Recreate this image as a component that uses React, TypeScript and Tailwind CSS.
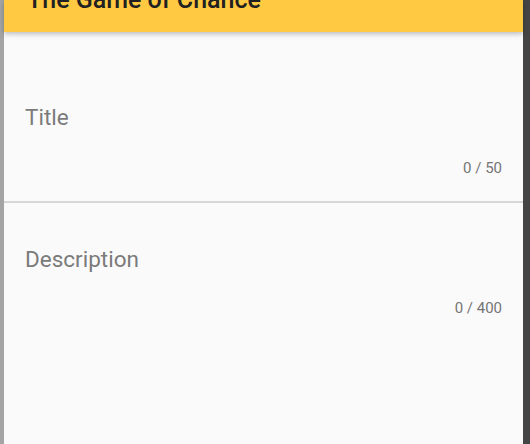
export default function App() {
  return (
    <div
      className="flex h-[444px] w-[530px] overflow-hidden bg-[#fafafa]"
      style={{ fontFamily: "Roboto, 'Liberation Sans', sans-serif" }}
    >
      <div className="w-[4px] shrink-0 bg-[#a4a4a4]" />
      <div className="flex w-[519px] shrink-0 flex-col">
        <header className="relative z-10 h-[32px] shrink-0 overflow-hidden bg-[#ffca42] shadow-[0_2px_5px_rgba(0,0,0,0.25)]">
          <h1 className="mt-[-13px] pl-[23px] text-[25px] font-medium leading-[25px] text-[#212121]">
            The Game of Chance
          </h1>
        </header>
        <div className="border-b-2 border-[#d6d6d6] px-[21px]">
          <label className="mt-[72px] block text-[22.5px] leading-[26px] text-[#7b7b7b]">
            Title
          </label>
          <div className="mt-[29px] mb-[24px] text-right text-[15px] leading-[18px] text-[#757575]">
            0 / 50
          </div>
        </div>
        <div className="px-[21px]">
          <label className="mt-[43px] block text-[22.5px] leading-[26px] text-[#7b7b7b]">
            Description
          </label>
          <div className="mt-[27px] text-right text-[15px] leading-[18px] text-[#757575]">
            0 / 400
          </div>
        </div>
      </div>
      <div className="flex-1 bg-[#454545]" />
    </div>
  );
}
